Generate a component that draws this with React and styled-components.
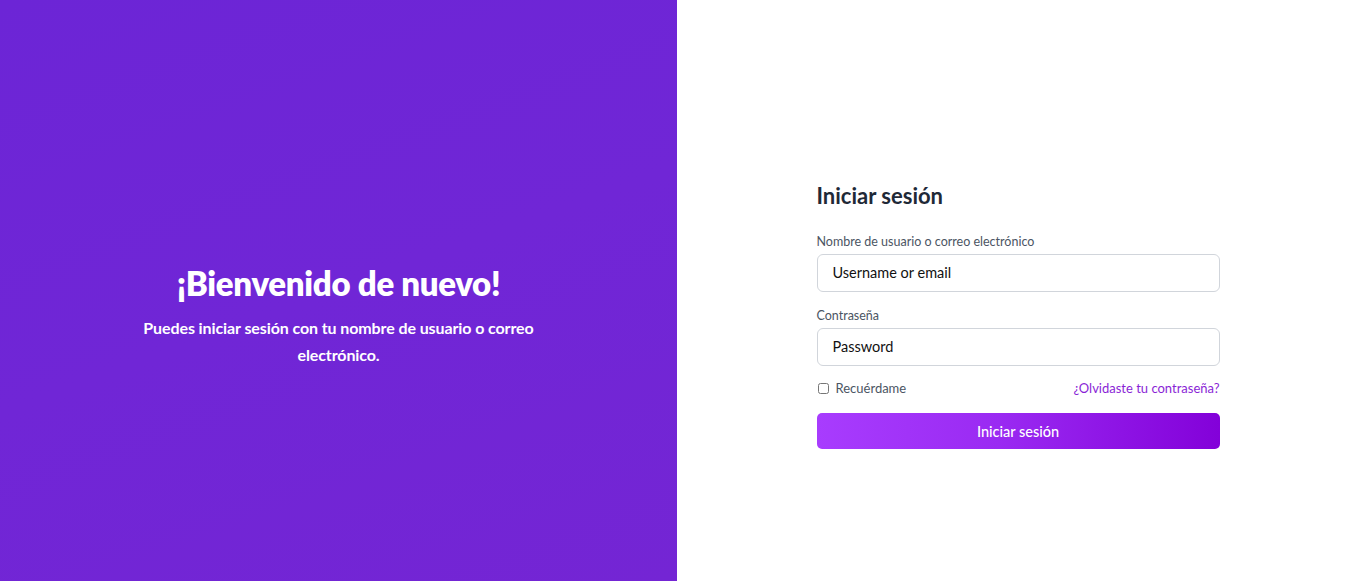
import React from "react";
import styled, { createGlobalStyle } from "styled-components";

const Global = createGlobalStyle`
  * { box-sizing: border-box; }
  html, body { margin: 0; padding: 0; }
  body { font-family: "Lato", "Noto Sans", sans-serif; background: #ffffff; }
`;

const Page = styled.div`
  display: flex;
  width: 100%;
  height: 581px;
`;

const Hero = styled.section`
  flex: 0 0 677px;
  background: linear-gradient(160deg, #6c25d6 0%, #7026d6 50%, #7425d4 100%);
  display: flex;
  flex-direction: column;
  align-items: center;
  justify-content: center;
  padding: 50px 0 0;
  color: #ffffff;
  text-align: center;
`;

const HeroTitle = styled.h1`
  margin: 0 0 11px;
  font-size: 33px;
  font-weight: 800;
  letter-spacing: -0.3px;
  line-height: 40px;
`;

const HeroText = styled.p`
  margin: 0;
  width: 440px;
  font-size: 16px;
  font-weight: 700;
  line-height: 27px;
  letter-spacing: -0.1px;
`;

const Side = styled.section`
  flex: 1;
  display: flex;
  align-items: center;
  justify-content: center;
  padding-top: 51px;
`;

const Form = styled.form`
  width: 403px;
  display: flex;
  flex-direction: column;
`;

const Title = styled.h2`
  margin: 0 0 25px;
  font-size: 22px;
  font-weight: 700;
  color: #1f2937;
  line-height: 26px;
`;

const Label = styled.label`
  display: block;
  font-size: 12.5px;
  color: #4b5563;
  line-height: 16px;
  margin-bottom: 4px;
`;

const Input = styled.input`
  width: 100%;
  height: 38px;
  border: 1px solid #d1d5db;
  border-radius: 6px;
  padding: 0 15px 1px;
  font-family: inherit;
  font-size: 14.5px;
  color: #111111;
  margin-bottom: ${(p) => p.$gap}px;
  outline: none;
  &::placeholder { color: #111111; opacity: 1; }
`;

const Row = styled.div`
  display: flex;
  align-items: center;
  justify-content: space-between;
  margin: 14px 0 17px;
`;

const Check = styled.label`
  display: flex;
  align-items: center;
  gap: 7px;
  font-size: 13px;
  color: #4b5563;
`;

const Box = styled.input`
  width: 11px;
  height: 11px;
  margin: 0 0 0 1px;
  accent-color: #8b2be2;
`;

const Forgot = styled.a`
  font-size: 13px;
  color: #8a1fd6;
  text-decoration: none;
`;

const Button = styled.button`
  height: 36px;
  border: 0;
  border-radius: 5px;
  background: linear-gradient(90deg, #a83cfe 0%, #9a2af2 45%, #8301d9 100%);
  color: #ffffff;
  font-family: inherit;
  font-size: 14.5px;
  font-weight: 500;
  cursor: pointer;
`;

export default function App() {
  return (
    <>
      <Global />
      <Page>
        <Hero>
          <HeroTitle>¡Bienvenido de nuevo!</HeroTitle>
          <HeroText>
            Puedes iniciar sesión con tu nombre de usuario o correo electrónico.
          </HeroText>
        </Hero>
        <Side>
          <Form onSubmit={(e) => e.preventDefault()}>
            <Title>Iniciar sesión</Title>
            <Label htmlFor="user">Nombre de usuario o correo electrónico</Label>
            <Input id="user" placeholder="Username or email" $gap={16} />
            <Label htmlFor="pass">Contraseña</Label>
            <Input id="pass" type="password" placeholder="Password" $gap={0} />
            <Row>
              <Check>
                <Box type="checkbox" />
                Recuérdame
              </Check>
              <Forgot href="#">¿Olvidaste tu contraseña?</Forgot>
            </Row>
            <Button type="submit">Iniciar sesión</Button>
          </Form>
        </Side>
      </Page>
    </>
  );
}
